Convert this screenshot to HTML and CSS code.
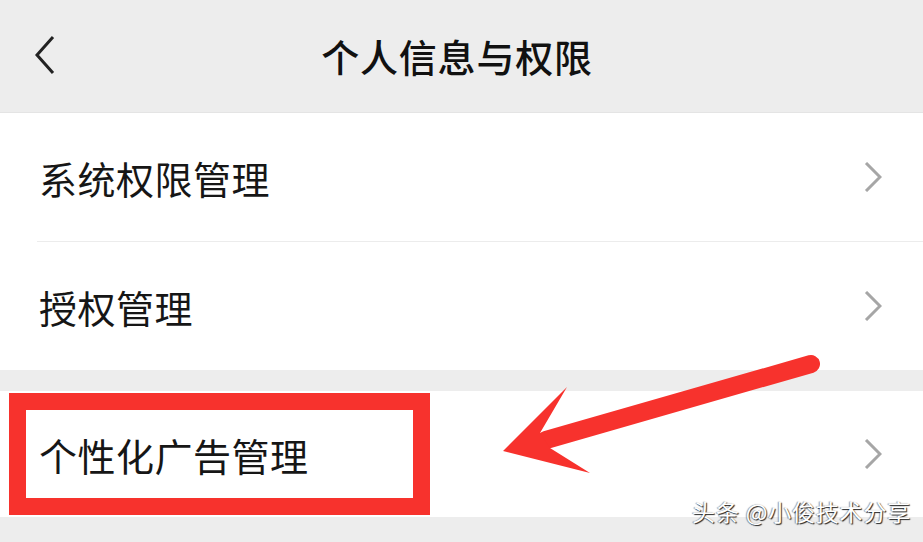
FILE: index.html
```html
<!DOCTYPE html>
<html lang="zh-CN">
<head>
<meta charset="utf-8">
<title>个人信息与权限</title>
<link rel="stylesheet" href="styles.css">
</head>
<body>
<div class="page">
  <header class="topbar">
    <svg class="back" viewBox="0 0 20 40" width="20" height="40"><polyline points="18,2 2,20 18,38" fill="none" stroke="#222" stroke-width="3" stroke-linejoin="miter"/></svg>
    <h1 class="title">个人信息与权限</h1>
    <span></span>
  </header>

  <section class="group">
    <div class="row">
      <span class="label">系统权限管理</span>
      <svg class="chev" viewBox="0 0 18 30" width="18" height="30"><polyline points="2,1 16,15 2,29" fill="none" stroke="#a6a6a6" stroke-width="3"/></svg>
    </div>
    <div class="row">
      <span class="label">授权管理</span>
      <svg class="chev" viewBox="0 0 18 30" width="18" height="30"><polyline points="2,1 16,15 2,29" fill="none" stroke="#a6a6a6" stroke-width="3"/></svg>
    </div>
  </section>

  <section class="group group-2">
    <div class="row row-ad">
      <span class="label">个性化广告管理</span>
      <svg class="chev" viewBox="0 0 18 30" width="18" height="30"><polyline points="2,1 16,15 2,29" fill="none" stroke="#a6a6a6" stroke-width="3"/></svg>
    </div>
  </section>

  <div class="highlight"></div>

  <svg class="arrow" viewBox="0 0 923 542" width="923" height="542">
    <line x1="546" y1="440" x2="811" y2="364" stroke="#f7322d" stroke-width="18" stroke-linecap="round"/>
    <polygon points="503,451 567,387 540,433 550,448 590,473" fill="#f7322d"/>
  </svg>

  <div class="watermark">头条 @小俊技术分享</div>
</div>
</body>
</html>
```

FILE: styles.css
```css
html, body {
  margin: 0;
  padding: 0;
}
body {
  background: #ededed;
  font-family: "Noto Sans CJK SC", "Noto Sans", sans-serif;
  color: #161616;
}
.page {
  position: relative;
  width: 923px;
  height: 542px;
  overflow: hidden;
  background: #ededed;
}
.topbar {
  height: 113px;
  display: grid;
  grid-template-columns: 1fr auto 1fr;
  align-items: center;
  padding-right: 9px;
  box-sizing: border-box;
  border-bottom: 1px solid #e4e4e4;
}
.back {
  display: block;
  margin-left: 35px;
  margin-top: -2px;
}
.title {
  margin: 0;
  font-size: 38px;
  font-weight: 500;
  line-height: 1;
  color: #111;
  letter-spacing: 0.8px;
}
.group {
  background: #fff;
  padding-left: 37px;
}
.group-2 {
  margin-top: 21px;
}
.row {
  height: 128px;
  display: flex;
  align-items: center;
  justify-content: space-between;
  padding-right: 41px;
  border-bottom: 1px solid #ececec;
}
.row:last-child {
  border-bottom: none;
}
.row-ad {
  height: 126px;
}
.label {
  font-size: 38px;
  line-height: 1;
  letter-spacing: 0.5px;
  padding-left: 2px;
  color: #161616;
  margin-top: 2px;
}
.chev {
  display: block;
}
.highlight {
  position: absolute;
  left: 9px;
  top: 393px;
  width: 421px;
  height: 122px;
  box-sizing: border-box;
  border: 17px solid #f7322d;
}
.arrow {
  position: absolute;
  left: 0;
  top: 0;
  pointer-events: none;
}
.watermark {
  position: absolute;
  right: 12px;
  top: 498px;
  font-size: 23px;
  line-height: 26px;
  letter-spacing: 0.8px;
  color: #fff;
  text-shadow: 1px 1px 1px rgba(0,0,0,0.85), -1px 0 1px rgba(0,0,0,0.4);
  white-space: nowrap;
}
```
